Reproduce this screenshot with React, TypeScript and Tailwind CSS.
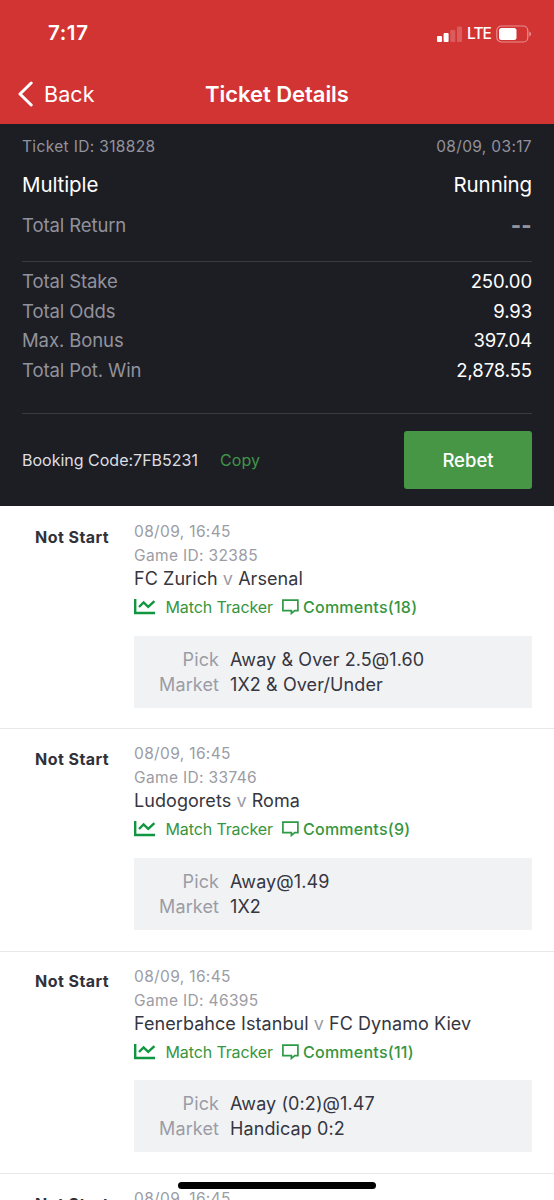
import clsx from 'clsx'

type Match = {
  time: string
  gameId: string
  home: string
  away: string
  comments: number
  pick: string
  market: string
}

const totals = [
  { label: 'Total Stake', value: '250.00' },
  { label: 'Total Odds', value: '9.93' },
  { label: 'Max. Bonus', value: '397.04' },
  { label: 'Total Pot. Win', value: '2,878.55' },
]

const matches: Match[] = [
  { time: '08/09, 16:45', gameId: '32385', home: 'FC Zurich', away: 'Arsenal', comments: 18, pick: 'Away & Over 2.5@1.60', market: '1X2 & Over/Under' },
  { time: '08/09, 16:45', gameId: '33746', home: 'Ludogorets', away: 'Roma', comments: 9, pick: 'Away@1.49', market: '1X2' },
  { time: '08/09, 16:45', gameId: '46395', home: 'Fenerbahce Istanbul', away: 'FC Dynamo Kiev', comments: 11, pick: 'Away (0:2)@1.47', market: 'Handicap 0:2' },
]

function StatusBar() {
  return (
    <div className="flex h-[67px] items-center justify-between pl-12 pr-[22px]">
      <span className="text-[20.5px] font-semibold tracking-[0.6px]">7:17</span>
      <div className="flex items-center">
        <svg width="25" height="16" viewBox="0 0 25 16" fill="#fff">
          <rect x="0" y="10" width="5" height="6" rx="1" />
          <rect x="6.6" y="7" width="5" height="9" rx="1" />
          <rect x="13.3" y="4" width="5" height="12" rx="1" opacity="0.2" />
          <rect x="20" y="0.5" width="5" height="15.5" rx="1" opacity="0.2" />
        </svg>
        <span className="ml-[5px] w-[24px] text-[15.5px] font-medium tracking-[-0.9px]">LTE</span>
        <svg className="ml-[5px]" width="36" height="18" viewBox="0 0 36 18" fill="none">
          <rect x="0.8" y="1" width="31" height="16" rx="4.5" stroke="#fff" strokeOpacity="0.45" strokeWidth="1.2" />
          <rect x="3" y="3" width="17.5" height="12" rx="2.5" fill="#fff" />
          <path d="M33.3 6.5c2.2.8 2.2 4.2 0 5z" fill="#fff" fillOpacity="0.5" />
        </svg>
      </div>
    </div>
  )
}

function NavBar() {
  return (
    <div className="grid h-[54px] grid-cols-[1fr_auto_1fr] items-center px-[18px]">
      <div className="flex items-center text-[21.5px] tracking-[0.1px]">
        <svg width="15" height="26" viewBox="0 0 15 26" fill="none" stroke="#fff" strokeWidth="3" strokeLinecap="round" strokeLinejoin="round">
          <path d="M13.2 2 2 13l11.2 11" />
        </svg>
        <span className="ml-[11px]">Back</span>
      </div>
      <h1 className="text-[22px] font-semibold tracking-[-0.05px]">Ticket Details</h1>
    </div>
  )
}

function TrackerIcon() {
  return (
    <svg width="21" height="16" viewBox="0 0 21 16" fill="none" stroke="#109640" strokeWidth="2.4">
      <path d="M1.2 0v14H21" />
      <path d="m5 8 4.6-4.5 4.6 4.4 6.2-5.7" />
    </svg>
  )
}

function CommentIcon() {
  return (
    <svg width="17" height="16" viewBox="0 0 17 16" fill="none" stroke="#2f9a45" strokeWidth="1.7">
      <path d="M.9 1.2h15v10.5h-3.1L9.4 14.4v-2.7H.9z" />
    </svg>
  )
}

function Summary() {
  return (
    <section className="h-[382px] bg-[#1d1e24] px-[22px] pt-[11px] text-[#92929c]">
      <div className="flex h-6 items-center justify-between text-[15.5px] tracking-[0.35px]">
        <span>Ticket ID: 318828</span>
        <span>08/09, 03:17</span>
      </div>
      <div className="flex h-[53px] items-center justify-between text-[20.5px] tracking-[-0.1px] text-white">
        <span>Multiple</span>
        <span>Running</span>
      </div>
      <div className="flex h-7 items-center justify-between text-[18.5px] tracking-[-0.1px]">
        <span>Total Return</span>
        <span className="-mt-[3px] text-[22px] font-extrabold leading-none tracking-[0.3px]">--</span>
      </div>
      <div className="mt-[21px] h-[153px] border-b border-t border-[#393a40] pt-[5.5px] text-[18.5px] tracking-[-0.1px]">
        {totals.map((row) => (
          <div key={row.label} className="flex h-[29.5px] items-center justify-between">
            <span>{row.label}</span>
            <span className="text-white">{row.value}</span>
          </div>
        ))}
      </div>
      <div className="mt-[17px] flex h-[58px] items-center text-[16px]">
        <span className="text-[#dedee2]">Booking Code:7FB5231</span>
        <button className="ml-[22px] tracking-[0.1px] text-[#3f9648]">Copy</button>
        <button className="ml-auto h-[58px] w-32 rounded-[3px] bg-[#469645] pt-[2px] text-[18.5px] font-medium text-white">
          Rebet
        </button>
      </div>
    </section>
  )
}

function MatchCard({ match, first }: { match: Match; first: boolean }) {
  return (
    <article className={clsx('flex h-[222.4px] border-t px-[22px] pt-[13px]', first ? 'border-white' : 'border-[#e8e8eb]')}>
      <div className="w-[112px] pl-[13px] pt-[4.5px] text-[16px] font-bold leading-6 tracking-[0.45px] text-[#303139]">
        Not Start
      </div>
      <div className="flex-1 whitespace-nowrap text-[#9b9ca5]">
        <div className="text-[15.5px] leading-6 tracking-[0.35px]">{match.time}</div>
        <div className="text-[15.5px] leading-6 tracking-[0.35px]">Game ID: {match.gameId}</div>
        <div className="text-[18px] leading-[22px] tracking-[0.06px] text-[#353641]">
          {match.home} <span className="text-[#9b9ca5]">v</span> {match.away}
        </div>
        <div className="mt-1 flex h-[26px] items-center text-[16px] text-[#37953e]">
          <TrackerIcon />
          <span className="ml-[10.5px] w-[116px] tracking-[-0.12px]">Match Tracker</span>
          <CommentIcon />
          <span className="ml-[4.5px] font-medium tracking-[0.25px]">Comments({match.comments})</span>
        </div>
        <div className="mt-[15.6px] grid h-[72px] grid-cols-[85px_1fr] content-center gap-x-[11px] bg-[#f1f2f4] text-[18px] leading-[25px] tracking-[0.1px]">
          <span className="text-right">Pick</span>
          <span className="text-[#353641]">{match.pick}</span>
          <span className="text-right">Market</span>
          <span className="text-[#353641]">{match.market}</span>
        </div>
      </div>
    </article>
  )
}

export default function App() {
  return (
    <main className="relative h-[1200px] w-[554px] overflow-hidden bg-white font-['Inter',sans-serif]">
      <header className="h-[124px] bg-[#d23434] text-white">
        <StatusBar />
        <NavBar />
      </header>
      <Summary />
      {matches.map((match, i) => (
        <MatchCard key={match.gameId} match={match} first={i === 0} />
      ))}
      {/* next match, only its top edge is on screen */}
      <div className="flex border-t border-[#e8e8eb] px-[22px] pt-[13px]">
        <div className="w-[112px] pl-[13px] pt-[4.5px] text-[16px] font-bold leading-6 tracking-[0.45px] text-[#303139]">
          Not Start
        </div>
        <div className="text-[15.5px] leading-6 tracking-[0.35px] text-[#9b9ca5]">08/09, 16:45</div>
      </div>
      {/* home indicator */}
      <div className="absolute bottom-[11px] left-[178px] h-[7px] w-[198px] rounded-full bg-black" />
    </main>
  )
}
